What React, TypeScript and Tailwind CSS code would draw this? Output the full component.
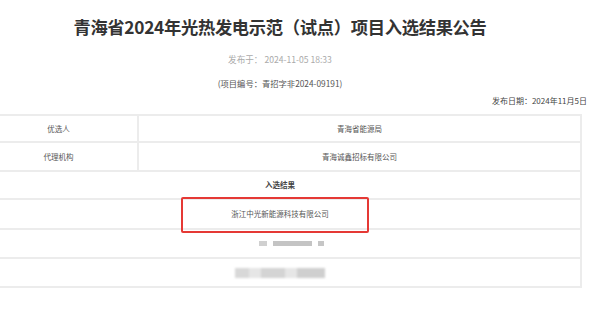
const rows = [
  { label: '优选人', value: '青海省能源局' },
  { label: '代理机构', value: '青海诚鑫招标有限公司' },
]

export default function App() {
  return (
    <div
      className="w-[600px] h-[309px] overflow-hidden bg-white text-[#444]"
      style={{ fontFamily: '"Noto Sans CJK SC", "Noto Sans", sans-serif' }}
    >
      <div className="ml-[-22px] w-[604px] flex flex-col">
        {/* Header */}
        <h1 className="mt-[17px] h-[20px] leading-[20px] text-center text-[17.3px] font-bold text-[#333] tracking-[-0.3px]">
          青海省2024年光热发电示范（试点）项目入选结果公告
        </h1>
        <p className="mt-[16px] h-[12px] leading-[12px] text-center text-[8.6px] text-[#aaa]">
          发布于：&nbsp;2024-11-05 18:33
        </p>
        <p className="mt-[12px] h-[12px] leading-[12px] text-center text-[8.3px] text-[#555]">
          (项目编号：青招字非2024-09191)
        </p>
        <p className="mt-[6px] mr-[-5px] h-[12px] leading-[12px] text-right text-[8px] text-[#444]">
          发布日期：2024年11月5日
        </p>

        {/* Result table */}
        <div className="relative mt-[7px] border-2 border-[#ececec] text-[7.5px] text-[#555]">
          {rows.map((r) => (
            <div key={r.label} className="flex h-[29px] border-b-2 border-[#ececec] first:h-[27px]">
              <div className="w-[159px] flex items-center justify-center border-r-2 border-[#ececec]">
                {r.label}
              </div>
              <div className="flex-1 flex items-center justify-center">{r.value}</div>
            </div>
          ))}
          <div className="flex h-[28px] items-center justify-center border-b-2 border-[#ececec] font-bold text-[#444]">
            入选结果
          </div>
          <div className="flex h-[30px] items-center justify-center border-b-2 border-[#ececec]">
            浙江中光新能源科技有限公司
          </div>
          <div className="flex h-[29px] items-center justify-center gap-[6px] border-b-2 border-[#ececec] pl-[22px]">
            <span className="h-[5px] w-[8px] bg-[#d0d0d0] blur-[0.6px]" />
            <span className="h-[5px] w-[39px] bg-[#c4c4c4] blur-[0.6px]" />
            <span className="h-[5px] w-[6px] bg-[#c6c6c6] blur-[0.6px]" />
          </div>
          <div className="flex h-[27px] items-center justify-center">
            <span className="flex h-[10px] w-[90px] gap-[2px] rounded-[2px] bg-[#e6e6e6] blur-[1.2px]">
              <span className="w-[14px] bg-[#d8d8d8]" />
              <span className="w-[8px]" />
              <span className="w-[24px] bg-[#d4d4d4]" />
              <span className="w-[8px]" />
              <span className="flex-1 bg-[#cfcfcf]" />
            </span>
          </div>

          {/* highlight around the winning bidder */}
          <div className="absolute left-[201px] top-[81px] h-[36px] w-[188px] rounded-[2px] border-2 border-[#e53935]" />
        </div>
      </div>
    </div>
  )
}
